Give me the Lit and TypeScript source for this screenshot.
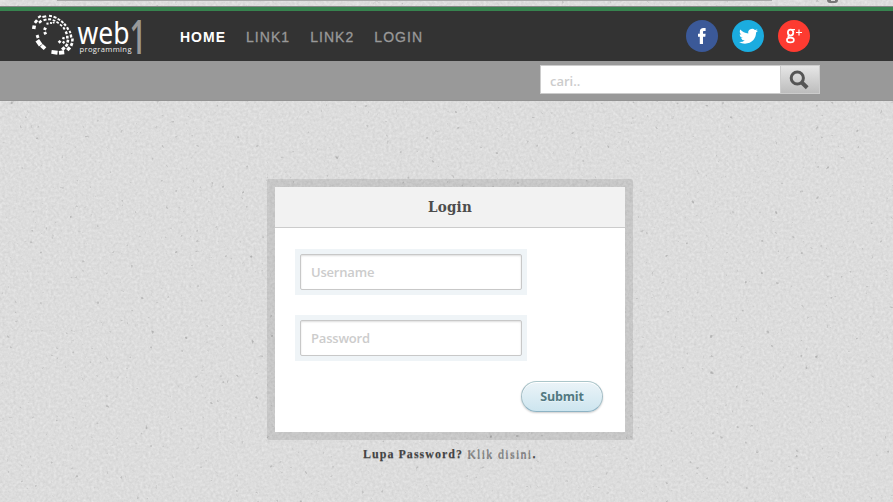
import { LitElement, html, css, svg } from "lit";
import { customElement } from "lit/decorators.js";

// Logo dashes: centre x, centre y, rotation in degrees, length, thickness
const DASHES: number[][] = [
  [14, 27.3, -80, 4, 3.6], [16, 21.5, -50, 4, 3], [19.5, 16.8, -32, 3.6, 2.2],
  [24.3, 16.6, -12, 4.4, 2.2], [30.5, 16, 6, 3.4, 2], [35, 17.3, 20, 3.6, 2],
  [38.9, 19.5, 32, 3.4, 2], [42.3, 22, 40, 3.2, 2], [45, 24.8, 48, 3, 2.2],
  [20.2, 21.8, -38, 3.6, 2.6], [25, 19.8, -18, 3.6, 2], [29.6, 19.3, 0, 3.4, 2],
  [34, 20.5, 20, 3.2, 1.8], [37.6, 22.5, 32, 3, 1.8], [41, 25.2, 42, 3, 1.8],
  [27.5, 23.6, -10, 2.4, 2], [31, 23, 5, 2.4, 1.8], [33.6, 22.6, 20, 2, 1.6],
  [25, 28.8, -68, 3, 3], [25.2, 33.2, 65, 3, 3],
  [44, 28.4, 60, 3, 2], [47.7, 28.6, 62, 3.2, 2.2], [50, 32, 68, 3, 2],
  [46.3, 32.8, 70, 3.2, 2.4], [51, 36, 82, 3.4, 2.4], [47.3, 37.1, 88, 3.2, 2.6],
  [52.4, 40, 95, 3.4, 2.6], [47.8, 41.2, 100, 3.2, 2.6], [51.6, 44.4, 112, 3.6, 2.8],
  [46.6, 45.2, 120, 3.6, 2.8], [48.6, 48.8, 132, 4.4, 3.4], [43.4, 48.6, 138, 4, 3.2],
  [39.6, 41.8, 135, 3, 2.8], [43.5, 38.2, 105, 2.6, 2.4], [43.6, 42.3, 125, 2.6, 2.4],
  [19, 42.7, 55, 6.8, 4.4], [23.2, 47, 42, 5.6, 4], [17.6, 36.6, 70, 3.6, 3],
  [34.5, 52.3, 8, 7, 4], [41.6, 52.6, -6, 6, 4],
];

@customElement("paper-background")
class PaperBackground extends LitElement {
  static styles = css`
    :host { position: absolute; inset: 0; z-index: -1; background: #dcdcdc; }
    svg { display: block; width: 100%; height: 100%; }
  `;
  render() {
    return html`<svg aria-hidden="true">
      <filter id="grain" x="0" y="0" width="100%" height="100%" color-interpolation-filters="sRGB">
        <feTurbulence type="fractalNoise" baseFrequency="0.37" numOctaves="2" seed="8"></feTurbulence>
        <feColorMatrix values="0.09 0.05 0 0 0.794  0.09 0.05 0 0 0.794  0.09 0.05 0 0 0.794  0 0 0 0 1"></feColorMatrix>
      </filter>
      <filter id="flecks" x="0" y="0" width="100%" height="100%" color-interpolation-filters="sRGB">
        <feTurbulence type="fractalNoise" baseFrequency="0.2" numOctaves="2" seed="31"></feTurbulence>
        <feColorMatrix values="0 0 0 0 0.64  0 0 0 0 0.64  0 0 0 0 0.64  5 0 0 0 -3.7"></feColorMatrix>
      </filter>
      <rect width="100%" height="100%" filter="url(#grain)"></rect>
      <rect width="100%" height="100%" filter="url(#flecks)"></rect>
    </svg>`;
  }
}

@customElement("site-logo")
class SiteLogo extends LitElement {
  static styles = css`
    :host { display: block; width: 130px; height: 50px; }
    svg { display: block; overflow: visible; }
    .word { font: 31.5px "Noto Sans", sans-serif; fill: #fff; }
    .sub { font: 7.6px "Open Sans", sans-serif; fill: #eee; }
    .one { font: 600 47.5px "Open Sans", sans-serif; fill: #999; }
  `;
  render() {
    return html`<svg width="130" height="50" viewBox="0 0 130 50">
      <g fill="#fff" transform="translate(0 -11)">
        ${DASHES.map(([x, y, a, l, t]) => svg`<rect x=${-l * 0.44} y=${-t * 0.49} width=${l * 0.88} height=${t * 0.98}
          transform="translate(${x} ${y}) rotate(${a})"></rect>`)}
      </g>
      <text class="word" x="57.5" y="32.5" textLength="52" lengthAdjust="spacingAndGlyphs">web</text>
      <text class="sub" x="59.5" y="41.2" textLength="52" lengthAdjust="spacing">programming</text>
      <text class="one" transform="translate(109.6 43) scale(.62 1)" x="0" y="0">1</text>
    </svg>`;
  }
}

@customElement("app-root")
class AppRoot extends LitElement {
  static styles = css`
    :host {
      display: block; position: relative; z-index: 0; width: 893px; height: 502px;
      overflow: hidden; font-family: "Open Sans", sans-serif;
    }
    * { box-sizing: border-box; }
    .strip { height: 7px; border-bottom: 1px solid #858585; display: flex; justify-content: space-between; }
    .strip-line { margin-left: 57px; width: 715px; height: 1px; background: #aaa; }
    .strip-mark { width: 11px; height: 3px; margin-right: 55px; background: #777; border-radius: 0 0 4px 4px; display: flex; justify-content: center; }
    .strip-mark i { width: 4px; height: 1px; background: #ddd; }
    .top { height: 54px; border-top: 4px solid #37834f; background: #333; display: flex; align-items: center; padding-left: 20px; }
    nav { display: flex; margin-left: 30px; width: 506px; padding-top: 2px; font: 14px/20px "Liberation Sans", sans-serif; letter-spacing: 1.05px; }
    nav a { color: #999; margin-right: 20px; -webkit-text-stroke: .3px #999; }
    nav a.on { color: #fff; font-weight: 700; letter-spacing: 1px; -webkit-text-stroke: 0; }
    .social { display: flex; gap: 14px; }
    .social svg { display: block; width: 32px; height: 32px; }
    .bar { height: 40px; background: #999; border-bottom: 1px solid #929292; padding: 4px 0 0 540px; }
    .search { display: flex; width: 280px; height: 29px; }
    .search input {
      width: 240px; height: 29px; margin: 0; padding: 3px 9px 0; background: #fff; outline: 0;
      border: 1px solid #ccc; border-right: 0; border-radius: 0; font: 600 13px "Open Sans", sans-serif;
    }
    input::placeholder { color: #ccc; opacity: 1; }
    .search button {
      width: 40px; height: 29px; padding: 0; border: 1px solid #ccc; background: linear-gradient(#e6e6e6, #bdbdbd);
      display: flex; align-items: center; justify-content: center;
    }
    .search svg { margin-right: 2px; }
    main { padding-top: 78px; }
    .card { width: 366px; height: 261px; margin-left: 267px; border: 8px solid rgba(0,0,0,.095); border-radius: 2px; background: #fff; background-clip: padding-box; }
    h1 {
      margin: 0; height: 41px; border-bottom: 1px solid #ccc; background: #f2f2f2; text-align: center; color: #4d4d4d;
      font: 700 15px/41px "DejaVu Serif Condensed", "DejaVu Serif", serif; letter-spacing: .2px;
    }
    form { display: flex; flex-direction: column; padding: 21px 22px 0 20px; }
    .field { width: 232px; height: 46px; padding: 5px; background: #eff4f7; margin-bottom: 20px; }
    .field input {
      display: block; width: 222px; height: 36px; padding: 0 10px; border: 1px solid #c8c8c8; border-radius: 2px;
      outline: 0; box-shadow: inset 0 1px 2px #ddd; font: 600 13px "Open Sans", sans-serif; letter-spacing: -.2px;
    }
    .submit {
      align-self: flex-end; width: 82px; height: 31px; padding: 0; border: 1px solid; border-radius: 16px;
      border-color: #abc6ca #a3bdc5 #8eb3c4; background: linear-gradient(#ebf4f8, #cde5ef); color: #527881;
      box-shadow: inset 0 1px #fff, 0 1px 2px rgba(0,0,0,.2); text-shadow: 0 1px #e5f3f7;
      font: 700 12.5px/29px "Open Sans", sans-serif; letter-spacing: -.2px;
    }
    .forgot { margin: 6px 0 0 363px; font: 700 12px/17px "Liberation Serif", serif; letter-spacing: 1.03px; color: #444; text-shadow: 0 1px #aaa; white-space: nowrap; }
    .forgot a { color: #888; font-weight: 400; letter-spacing: 1.3px; text-shadow: 0 1px #777; }
  `;

  render() {
    return html`
      <paper-background></paper-background>
      <div class="strip"><div class="strip-line"></div><div class="strip-mark"><i></i></div></div>
      <header class="top">
        <site-logo></site-logo>
        <nav><a class="on">HOME</a><a>LINK1</a><a>LINK2</a><a>LOGIN</a></nav>
        <div class="social">
          <svg viewBox="0 0 32 32"><circle cx="16" cy="16" r="16" fill="#3b5998"></circle>
            <path fill="#fff" d="M13.8 24v-7.2H12v-3.1h1.8v-1.9c0-2.6 1.4-3.7 3.7-3.7h2.1v3h-1.4c-1 0-1.2.4-1.2 1.2v1.4h2.6l-.3 3.1H17V24z"></path></svg>
          <svg viewBox="0 0 32 32"><circle cx="16" cy="16" r="16" fill="#1bacdf"></circle>
            <path transform="translate(7 7.2) scale(.79 .76)" fill="#fff" d="M23.953 4.57a10 10 0 01-2.825.775 4.958 4.958 0 002.163-2.723c-.951.555-2.005.959-3.127 1.184a4.92 4.92 0 00-8.384 4.482C7.69 8.095 4.067 6.13 1.64 3.162a4.822 4.822 0 00-.666 2.475c0 1.71.87 3.213 2.188 4.096a4.904 4.904 0 01-2.228-.616v.06a4.923 4.923 0 003.946 4.827 4.996 4.996 0 01-2.212.085 4.936 4.936 0 004.604 3.417 9.867 9.867 0 01-6.102 2.105c-.39 0-.779-.023-1.17-.067a13.995 13.995 0 007.557 2.209c9.053 0 13.998-7.496 13.998-13.985 0-.21 0-.42-.015-.63A9.935 9.935 0 0024 4.59z"></path></svg>
          <svg viewBox="0 0 32 32"><circle cx="16" cy="16" r="16" fill="#fd3b31"></circle>
            <g fill="none" stroke="#fff">
              <ellipse cx="12.6" cy="12.6" rx="2.7" ry="3" stroke-width="1.8"></ellipse>
              <ellipse cx="12.4" cy="20" rx="3.5" ry="2.4" stroke-width="1.6"></ellipse>
              <path d="M13 9.6h4M11 15.2c-1.6 1-1.4 2 1.6 2.4" stroke-width="1.2"></path>
              <path d="M21 9.5v6M18 12.5h6" stroke-width="1.2"></path>
            </g></svg>
        </div>
      </header>
      <div class="bar">
        <div class="search">
          <input placeholder="cari.." aria-label="cari" />
          <button aria-label="cari"><svg width="20" height="20" viewBox="0 0 20 20" fill="none" stroke="#555">
            <circle cx="8.3" cy="8" r="6.1" stroke-width="3"></circle>
            <path d="M12.8 12.5l5.4 5.2" stroke-width="4"></path></svg></button>
        </div>
      </div>
      <main>
        <section class="card">
          <h1>Login</h1>
          <form>
            <div class="field"><input placeholder="Username" /></div>
            <div class="field"><input type="password" placeholder="Password" /></div>
            <button class="submit" type="button">Submit</button>
          </form>
        </section>
        <p class="forgot">Lupa Password? <a>Klik disini</a>.</p>
      </main>
    `;
  }
}
